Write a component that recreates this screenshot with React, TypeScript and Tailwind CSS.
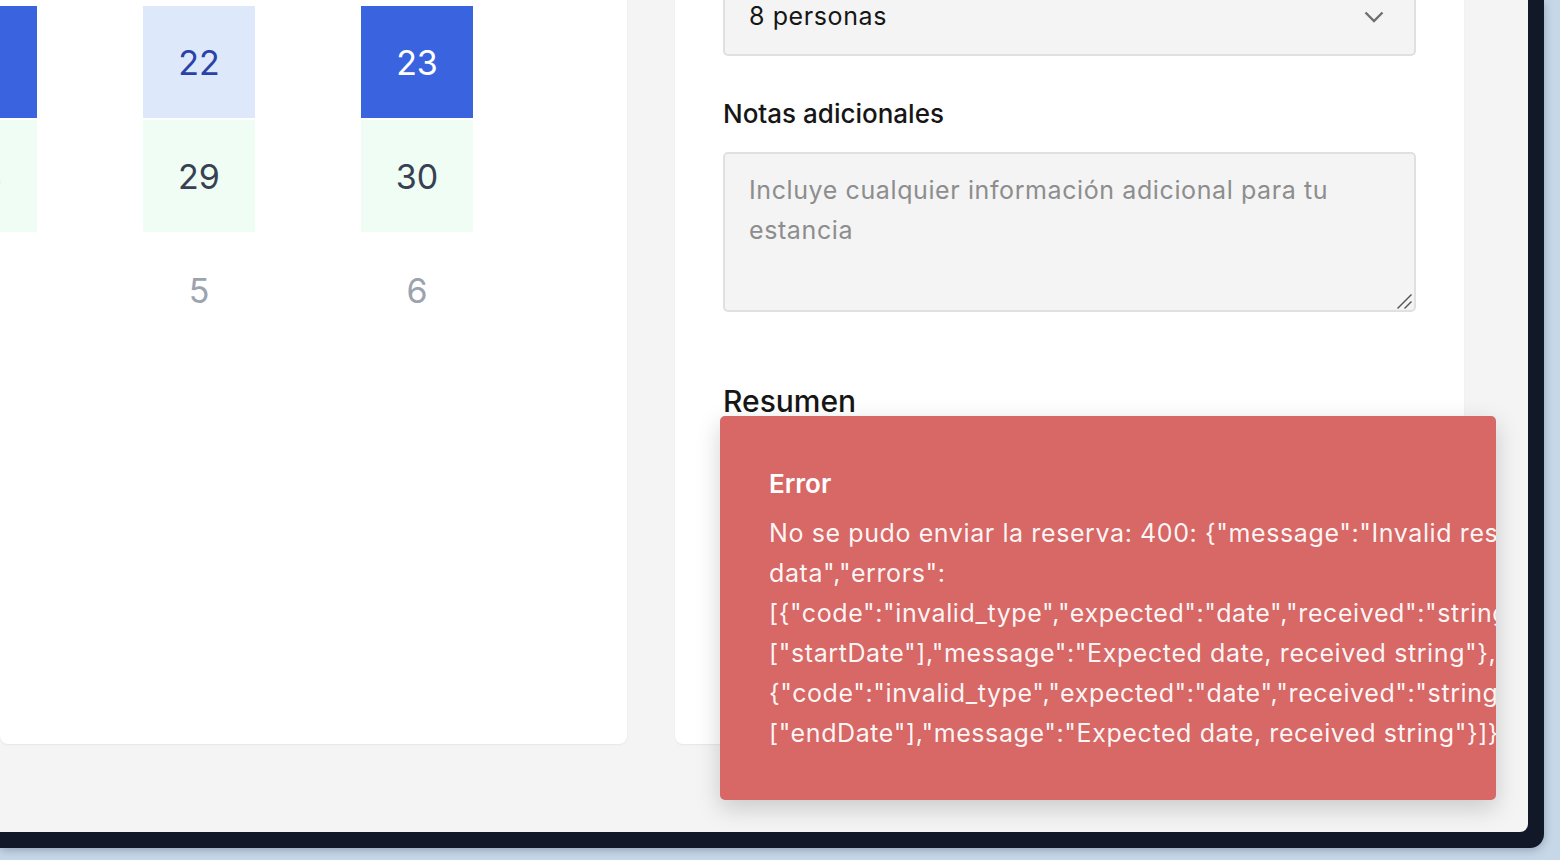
// only the three right-hand weekday columns are in view
const weeks = [
  [21, 22, 23],
  [28, 29, 30],
  [4, 5, 6],
]

const errorLines = [
  'No se pudo enviar la reserva: 400: {"message":"Invalid reservation',
  'data","errors":',
  '[{"code":"invalid_type","expected":"date","received":"string","path":',
  '["startDate"],"message":"Expected date, received string"},',
  '{"code":"invalid_type","expected":"date","received":"string","path":',
  '["endDate"],"message":"Expected date, received string"}]}',
]

function cellClass(week: number, day: number) {
  if (week === 0) {
    if (day === 21 || day === 23) return 'bg-[#3a63e0] text-white'
    return 'bg-[#dde8fb] text-[#2a42a8]'
  }
  if (week === 1) return 'bg-[#f0fdf4] text-[#374151]'
  return 'text-[#9ca3af]'
}

export default function App() {
  return (
    <div
      className="relative h-[860px] w-[1560px] overflow-hidden bg-[#c6d8e8]"
      style={{ fontFamily: 'Inter, "Noto Sans", sans-serif' }}
    >
      {/* window frame */}
      <div className="flex h-[848px] w-[1544px] rounded-br-[14px] bg-[#111827] pr-4 pb-4 shadow-[0_2px_10px_rgba(40,60,90,0.35)]">
        <div className="flex-1 overflow-hidden rounded-br-[8px] bg-[#f4f4f4]">
          <div className="-mt-[100px] flex h-[844px] gap-12 pr-16">
            {/* Calendar card */}
            <div className="flex flex-1 justify-end overflow-hidden rounded-b-[8px] bg-white pt-[106px] pr-12 shadow-[0_1px_2px_rgba(0,0,0,0.06)]">
              <div className="grid shrink-0 grid-cols-[repeat(3,218px)] gap-y-[2px] self-start">
                {weeks.map((week, wi) =>
                  week.map((day) => (
                    <div
                      key={`${wi}-${day}`}
                      className={`flex h-[112px] w-[112px] items-center justify-center text-[34px] ${cellClass(wi, day)}`}
                    >
                      {day}
                    </div>
                  ))
                )}
              </div>
            </div>

            {/* Form card */}
            <div className="flex w-[789px] flex-col rounded-b-[8px] bg-white px-12 pt-[76px] shadow-[0_1px_2px_rgba(0,0,0,0.06)]">
              <div className="flex h-[80px] items-center justify-between rounded-[5px] border-2 border-[#e0e0e0] bg-[#f4f4f4] pt-[2px] pr-[30px] pl-[24px]">
                <span className="text-[25px] tracking-[0.6px] text-[#161616]">8 personas</span>
                <svg width="20" height="12" viewBox="0 0 20 12" fill="none" stroke="#6f6f6f" strokeWidth={2.4}>
                  <polyline points="1.5,1.5 10,10 18.5,1.5" />
                </svg>
              </div>

              <label className="mt-[38px] text-[26px] leading-[40px] font-medium text-[#161616]">Notas adicionales</label>

              <div className="relative mt-[18px]">
                <textarea
                  className="block h-[160px] w-full resize-none rounded-[5px] border-2 border-[#e0e0e0] bg-[#f4f4f4] px-[24px] py-[16px] text-[25px] leading-[40px] tracking-[0.6px] text-[#161616] outline-none placeholder:text-[#8d8d8d]"
                  placeholder="Incluye cualquier información adicional para tu estancia"
                />
                <svg className="absolute right-[3px] bottom-[3px]" width="16" height="16" viewBox="0 0 16 16" stroke="#555" strokeWidth={1.4}>
                  <line x1="0.5" y1="15.5" x2="14.5" y2="1.5" />
                  <line x1="7.5" y1="15.5" x2="14.5" y2="8.5" />
                </svg>
              </div>

              <h2 className="mt-[69px] text-[30px] leading-[40px] font-medium text-[#161616]">Resumen</h2>
            </div>
          </div>
        </div>
      </div>

      {/* Error toast */}
      <div className="absolute top-[416px] left-[720px] h-[384px] w-[776px] overflow-hidden rounded-[5px] bg-[#d76866] pt-[48px] pl-[49px] shadow-[0_8px_24px_rgba(0,0,0,0.18)]">
        <p className="text-[26px] leading-[40px] font-semibold text-white">Error</p>
        <p className="mt-[9px] text-[25px] leading-[40px] tracking-[0.6px] whitespace-nowrap text-white/95">
          {errorLines.map((line, i) => (
            <span key={i} className="block">
              {line}
            </span>
          ))}
        </p>
      </div>
    </div>
  )
}
